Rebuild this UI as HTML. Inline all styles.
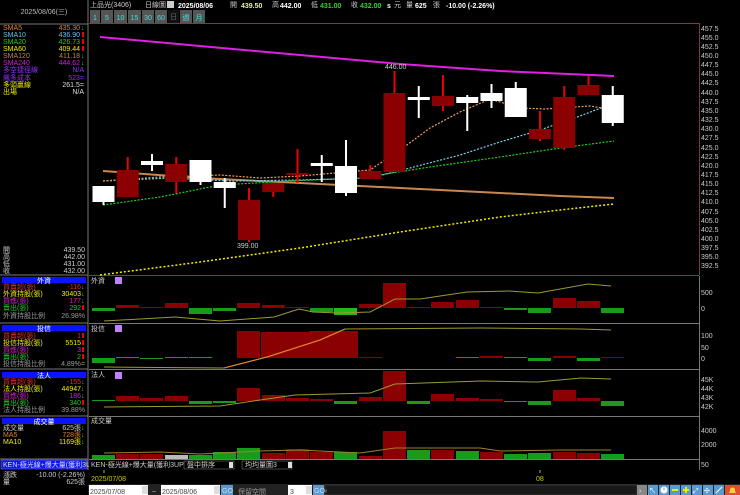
<!DOCTYPE html>
<html><head><meta charset="utf-8">
<style>
html,body{margin:0;padding:0;background:#000;width:740px;height:495px;overflow:hidden}
svg{display:block}
text{font-family:"Liberation Sans","Noto Sans CJK TC",sans-serif;font-size:7px}
.m{font-family:"Liberation Mono","Noto Sans CJK TC",monospace}
</style></head><body>
<svg width="740" height="495" viewBox="0 0 740 495" xmlns="http://www.w3.org/2000/svg">
<rect width="740" height="495" fill="#000"/>
<!-- left panel frame -->
<line x1="88" y1="0" x2="88" y2="470" stroke="#777" stroke-width="1"/>
<line x1="0" y1="24" x2="88" y2="24" stroke="#777"/>
<text x="44" y="14" fill="#bbb" text-anchor="middle" font-size="7">2025/08/06(三)</text>
<!-- SMA list -->
<g font-size="7">
<text x="3" y="30" fill="#e08030">SMA5</text><text x="80" y="30" fill="#e08030" text-anchor="end">435.30</text><text x="81" y="30" fill="#2c2">↓</text>
<text x="3" y="37" fill="#5cc8e8">SMA10</text><text x="80" y="37" fill="#5cc8e8" text-anchor="end">436.90</text><rect x="82" y="32" width="2" height="5" fill="#e00"/>
<text x="3" y="44" fill="#2c2">SMA20</text><text x="80" y="44" fill="#2c2" text-anchor="end">426.73</text><rect x="82" y="39" width="2" height="5" fill="#e00"/>
<text x="3" y="51" fill="#ee0">SMA60</text><text x="80" y="51" fill="#ee0" text-anchor="end">409.44</text><rect x="82" y="46" width="2" height="5" fill="#e00"/>
<text x="3" y="58" fill="#c08050">SMA120</text><text x="80" y="58" fill="#c08050" text-anchor="end">411.18</text><text x="81" y="58" fill="#2c2">↓</text>
<text x="3" y="65" fill="#d020d0">SMA240</text><text x="80" y="65" fill="#d020d0" text-anchor="end">444.62</text><text x="81" y="65" fill="#2c2">↓</text>
<text x="3" y="72" fill="#9030ff">多空捷徑線</text><text x="84" y="72" fill="#9030ff" text-anchor="end">N/A</text>
<text x="3" y="80" fill="#9030ff">飆多成本</text><text x="84" y="80" fill="#9030ff" text-anchor="end">523=</text>
<text x="3" y="87" fill="#ee0">多頭贏線</text><text x="84" y="87" fill="#ddd" text-anchor="end">261.5=</text>
<text x="3" y="94" fill="#ee0">出場</text><text x="84" y="94" fill="#ddd" text-anchor="end">N/A</text>
</g>
<g font-size="7" fill="#ccc">
<text x="3" y="252">開</text><text x="85" y="252" text-anchor="end">439.50</text>
<text x="3" y="259">高</text><text x="85" y="259" text-anchor="end">442.00</text>
<text x="3" y="266">低</text><text x="85" y="266" text-anchor="end">431.00</text>
<text x="3" y="273">收</text><text x="85" y="273" text-anchor="end">432.00</text>
</g>
<g stroke="#777"><line x1="0" y1="275" x2="88" y2="275"/><line x1="0" y1="323" x2="88" y2="323"/><line x1="0" y1="369" x2="88" y2="369"/><line x1="0" y1="416" x2="88" y2="416"/><line x1="0" y1="459" x2="88" y2="459"/></g>
<!-- 外資 -->
<rect x="2" y="277" width="84" height="6" fill="#0a14ff"/><text x="44" y="283" fill="#fff" text-anchor="middle">外資</text>
<g font-size="7">
<text x="3" y="289" fill="#e03030">買賣超(張)</text><text x="81" y="289" fill="#e03030" text-anchor="end">-116</text><text x="81" y="289" fill="#2c2">↓</text>
<text x="3" y="296" fill="#ee0">外資持股(張)</text><text x="81" y="296" fill="#ee0" text-anchor="end">30403</text><text x="81" y="296" fill="#2c2">↓</text>
<text x="3" y="303" fill="#d020d0">買進(張)</text><text x="81" y="303" fill="#d020d0" text-anchor="end">177</text><text x="81" y="303" fill="#2c2">↓</text>
<text x="3" y="310" fill="#2c2">賣出(張)</text><text x="81" y="310" fill="#2c2" text-anchor="end">292</text><rect x="82" y="305" width="2" height="5" fill="#e00"/>
<text x="3" y="318" fill="#999">外資持股比例</text><text x="85" y="318" fill="#999" text-anchor="end">26.98%</text>
</g>
<!-- 投信 -->
<rect x="2" y="325" width="84" height="6" fill="#0a14ff"/><text x="44" y="331" fill="#fff" text-anchor="middle">投信</text>
<g font-size="7">
<text x="3" y="338" fill="#e03030">買賣超(張)</text><text x="81" y="338" fill="#e03030" text-anchor="end">1</text><rect x="82" y="333" width="2" height="5" fill="#e00"/>
<text x="3" y="345" fill="#ee0">投信持股(張)</text><text x="81" y="345" fill="#ee0" text-anchor="end">5515</text><rect x="82" y="340" width="2" height="5" fill="#e00"/>
<text x="3" y="352" fill="#d020d0">買進(張)</text><text x="81" y="352" fill="#d020d0" text-anchor="end">3</text><rect x="82" y="347" width="2" height="5" fill="#e00"/>
<text x="3" y="359" fill="#2c2">賣出(張)</text><text x="81" y="359" fill="#2c2" text-anchor="end">2</text><rect x="82" y="354" width="2" height="5" fill="#e00"/>
<text x="3" y="366" fill="#999">投信持股比例</text><text x="85" y="366" fill="#999" text-anchor="end">4.89%=</text>
</g>
<!-- 法人 -->
<rect x="2" y="372" width="84" height="6" fill="#0a14ff"/><text x="44" y="378" fill="#fff" text-anchor="middle">法人</text>
<g font-size="7">
<text x="3" y="384" fill="#e03030">買賣超(張)</text><text x="81" y="384" fill="#e03030" text-anchor="end">-155</text><text x="81" y="384" fill="#2c2">↓</text>
<text x="3" y="391" fill="#ee0">法人持股(張)</text><text x="81" y="391" fill="#ee0" text-anchor="end">44947</text><text x="81" y="391" fill="#2c2">↓</text>
<text x="3" y="398" fill="#d020d0">買進(張)</text><text x="81" y="398" fill="#d020d0" text-anchor="end">186</text><text x="81" y="398" fill="#2c2">↓</text>
<text x="3" y="405" fill="#2c2">賣出(張)</text><text x="81" y="405" fill="#2c2" text-anchor="end">340</text><rect x="82" y="400" width="2" height="5" fill="#e00"/>
<text x="3" y="412" fill="#999">法人持股比例</text><text x="85" y="412" fill="#999" text-anchor="end">39.88%</text>
</g>
<!-- 成交量 -->
<rect x="2" y="418" width="84" height="6" fill="#0a14ff"/><text x="44" y="424" fill="#fff" text-anchor="middle">成交量</text>
<g font-size="7">
<text x="3" y="430" fill="#ccc">成交量</text><text x="81" y="430" fill="#ccc" text-anchor="end">625張</text><text x="81" y="430" fill="#2c2">↓</text>
<text x="3" y="437" fill="#e08030">MA5</text><text x="81" y="437" fill="#e08030" text-anchor="end">728張</text><text x="81" y="437" fill="#2c2">↓</text>
<text x="3" y="444" fill="#ee0">MA10</text><text x="81" y="444" fill="#ee0" text-anchor="end">1169張</text><text x="81" y="444" fill="#2c2">↓</text>
</g>
<!-- KEN bar -->
<rect x="1" y="460" width="86" height="9" fill="#0a14ff" stroke="#888" stroke-width="0.5"/>
<text x="3" y="467" fill="#ddd">KEN-極光線+爆大量(獲利3UP)</text>
<text x="3" y="477" fill="#ccc">漲跌</text><text x="85" y="477" fill="#ccc" text-anchor="end">-10.00 (-2.26%)</text>
<text x="3" y="484" fill="#ccc">量</text><text x="85" y="484" fill="#ccc" text-anchor="end">625張</text>

<!-- header -->
<g font-size="8">
<text x="90" y="7" fill="#ccc">上品光(3406)</text>
<text x="145" y="7" fill="#ccc">日線圖</text>
<rect x="167" y="1" width="7" height="7" fill="#ccc"/>
<text x="178" y="8" fill="#fff" font-weight="bold" font-size="9">2025/08/06</text>
<text x="230" y="7" fill="#ccc">開</text><text x="241" y="8" fill="#e8f0a0" font-weight="bold" font-size="9">439.50</text>
<text x="272" y="7" fill="#ccc">高</text><text x="280" y="8" fill="#fff" font-weight="bold" font-size="9">442.00</text>
<text x="311" y="7" fill="#ccc">低</text><text x="320" y="8" fill="#3c3" font-weight="bold" font-size="9">431.00</text>
<text x="351" y="7" fill="#ccc">收</text><text x="360" y="8" fill="#3c3" font-weight="bold" font-size="9">432.00</text>
<text x="387" y="8" fill="#fff" font-weight="bold">s</text><text x="394" y="7" fill="#ccc">元</text>
<text x="406" y="7" fill="#ccc">量</text><text x="415" y="8" fill="#fff" font-weight="bold" font-size="9">625</text><text x="433" y="7" fill="#ccc">張</text>
<text x="446" y="8" fill="#fff" font-weight="bold" font-size="9">-10.00 (-2.26%)</text>
</g>
<!-- buttons -->
<g font-size="8" fill="#4dd">
<rect x="90" y="10" width="10" height="13" fill="#555"/><text x="95" y="20" text-anchor="middle">1</text>
<rect x="101" y="10" width="12" height="13" fill="#555"/><text x="107" y="20" text-anchor="middle">5</text>
<rect x="114" y="10" width="13" height="13" fill="#555"/><text x="120.5" y="20" text-anchor="middle">10</text>
<rect x="128" y="10" width="13" height="13" fill="#555"/><text x="134.5" y="20" text-anchor="middle">15</text>
<rect x="142" y="10" width="12" height="13" fill="#555"/><text x="148" y="20" text-anchor="middle">30</text>
<rect x="155" y="10" width="12" height="13" fill="#555"/><text x="161" y="20" text-anchor="middle">60</text>
<rect x="168" y="10" width="11" height="13" fill="#111"/><text x="173.5" y="19" text-anchor="middle" fill="#666" font-size="6">日</text>
<rect x="180" y="10" width="12" height="13" fill="#555"/><text x="186" y="20" text-anchor="middle">週</text>
<rect x="193" y="10" width="12" height="13" fill="#555"/><text x="199" y="20" text-anchor="middle">月</text>
</g>

<!-- main chart frame -->
<line x1="89" y1="23.5" x2="699" y2="23.5" stroke="#7a3a4a"/>
<line x1="699.5" y1="23" x2="699.5" y2="275" stroke="#7a3a4a"/>
<line x1="89" y1="275.5" x2="699" y2="275.5" stroke="#7a3a4a"/>
<g stroke="#777"><line x1="89" y1="323.5" x2="699" y2="323.5"/><line x1="89" y1="369.5" x2="699" y2="369.5"/><line x1="89" y1="416.5" x2="699" y2="416.5"/><line x1="89" y1="459.5" x2="699" y2="459.5"/>
<line x1="699.5" y1="276" x2="699.5" y2="470"/></g>

<!-- price axis -->
<g fill="#ccc" font-size="7.5">
<text x="701" y="31">457.5</text><text x="701" y="40">455.0</text><text x="701" y="49">452.5</text><text x="701" y="58">450.0</text><text x="701" y="67">447.5</text><text x="701" y="76">445.0</text><text x="701" y="85">442.5</text><text x="701" y="95">440.0</text><text x="701" y="104">437.5</text><text x="701" y="113">435.0</text><text x="701" y="122">432.5</text><text x="701" y="131">430.0</text><text x="701" y="140">427.5</text><text x="701" y="150">425.0</text><text x="701" y="159">422.5</text><text x="701" y="168">420.0</text><text x="701" y="177">417.5</text><text x="701" y="186">415.0</text><text x="701" y="195">412.5</text><text x="701" y="204">410.0</text><text x="701" y="214">407.5</text><text x="701" y="223">405.0</text><text x="701" y="232">402.5</text><text x="701" y="241">400.0</text><text x="701" y="250">397.5</text><text x="701" y="259">395.0</text><text x="701" y="268">392.5</text>
<text x="701" y="295">500</text><text x="701" y="311">0</text>
<text x="701" y="338">100</text><text x="701" y="350">50</text><text x="701" y="361">0</text>
<text x="701" y="382">45K</text><text x="701" y="391">44K</text><text x="701" y="400">43K</text><text x="701" y="409">42K</text>
<text x="701" y="433">4000</text><text x="701" y="447">2000</text><text x="701" y="467">50</text>
</g>

<!-- MA lines -->
<polyline points="100,37 200,46 300,55 400,64 500,71 614,76" fill="none" stroke="#e020e0" stroke-width="2"/>
<polyline points="103,171 200,178 300,183 400,188 500,193 560,196 614,198" fill="none" stroke="#c88850" stroke-width="2"/>
<polyline points="100,275 200,262 300,248 400,232 500,217 560,210 614,204" fill="none" stroke="#ee0" stroke-width="1.5" stroke-dasharray="2,2"/>
<polyline points="103,205 160,197 220,185 290,181 360,178 430,167 500,157 560,148 614,141" fill="none" stroke="#2c2" stroke-width="1.2" stroke-dasharray="2,1.5"/>
<polyline points="103,181 170,178 230,181 300,180 370,178 410,168 460,155 500,142 540,130 580,116 614,103" fill="none" stroke="#7cd0f0" stroke-width="1.2" stroke-dasharray="2,1.5"/>
<polyline points="103,181 160,177 220,175 260,178 300,176 370,170 400,150 430,128 460,112 490,99 520,108 545,109 590,106 614,110" fill="none" stroke="#f0a050" stroke-width="1.2" stroke-dasharray="2,1.5"/>

<!-- candles -->
<g>
<rect x="102.5" y="186" width="2" height="19" fill="#fff"/><rect x="92.5" y="186" width="22" height="16" fill="#fff"/>
<rect x="126.75" y="157" width="2" height="40" fill="#e00"/><rect x="116.75" y="170" width="22" height="27" fill="#8b0000"/>
<rect x="151" y="154" width="2" height="17" fill="#fff"/><rect x="141" y="161" width="22" height="4" fill="#fff"/>
<rect x="175.25" y="157" width="2" height="36" fill="#e00"/><rect x="165.25" y="164" width="22" height="18" fill="#8b0000"/>
<rect x="199.5" y="160" width="2" height="25" fill="#fff"/><rect x="189.5" y="160" width="22" height="22" fill="#fff"/>
<rect x="223.75" y="178" width="2" height="30" fill="#fff"/><rect x="213.75" y="182" width="22" height="6" fill="#fff"/>
<rect x="248" y="188" width="2" height="54" fill="#e00"/><rect x="238" y="200" width="22" height="40" fill="#8b0000"/>
<rect x="272.25" y="183" width="2" height="14" fill="#e00"/><rect x="262.25" y="183" width="22" height="9" fill="#8b0000"/>
<rect x="296.5" y="149" width="2" height="34" fill="#e00"/><rect x="286.5" y="173" width="22" height="2" fill="#8b0000"/>
<rect x="320.75" y="155" width="2" height="27" fill="#fff"/><rect x="310.75" y="163" width="22" height="3" fill="#fff"/>
<rect x="345" y="140" width="2" height="56" fill="#fff"/><rect x="335" y="166" width="22" height="27" fill="#fff"/>
<rect x="369.25" y="165" width="2" height="14" fill="#e00"/><rect x="359.25" y="171" width="22" height="8" fill="#8b0000"/>
<rect x="393.5" y="71" width="2" height="101" fill="#e00"/><rect x="383.5" y="93" width="22" height="79" fill="#8b0000"/>
<rect x="417.75" y="86" width="2" height="32" fill="#fff"/><rect x="407.75" y="97" width="22" height="3" fill="#fff"/>
<rect x="442" y="75" width="2" height="36" fill="#e00"/><rect x="432" y="96" width="22" height="10" fill="#8b0000"/>
<rect x="466.25" y="95" width="2" height="36" fill="#fff"/><rect x="456.25" y="97" width="22" height="6" fill="#fff"/>
<rect x="490.5" y="84" width="2" height="24" fill="#fff"/><rect x="480.5" y="93" width="22" height="8" fill="#fff"/>
<rect x="514.75" y="82" width="2" height="35" fill="#fff"/><rect x="504.75" y="88" width="22" height="29" fill="#fff"/>
<rect x="539" y="111" width="2" height="30" fill="#e00"/><rect x="529" y="129" width="22" height="10" fill="#8b0000"/>
<rect x="563.25" y="86" width="2" height="64" fill="#e00"/><rect x="553.25" y="97" width="22" height="51" fill="#8b0000"/>
<rect x="587.5" y="76" width="2" height="19" fill="#e00"/><rect x="577.5" y="85" width="22" height="10" fill="#8b0000"/>
<rect x="611.75" y="86" width="2" height="40" fill="#fff"/><rect x="601.75" y="95" width="22" height="28" fill="#fff"/>
</g>
<text x="385" y="69" fill="#ccc" font-size="7.5">446.00</text>
<text x="237" y="248" fill="#ccc" font-size="7.5">399.00</text>

<!-- 外資 panel -->
<text x="91" y="283" fill="#ccc">外資</text><rect x="115" y="277" width="7" height="7" fill="#c080ff"/>
<g>
<rect x="92" y="308" width="23" height="3" fill="#1a9a1a"/>
<rect x="116" y="305" width="23" height="3" fill="#8b0000"/>
<rect x="140" y="307" width="23" height="1" fill="#8b0000"/>
<rect x="165" y="303" width="23" height="5" fill="#8b0000"/>
<rect x="189" y="308" width="23" height="6" fill="#1a9a1a"/>
<rect x="213" y="308" width="23" height="3" fill="#1a9a1a"/>
<rect x="237" y="303" width="23" height="5" fill="#8b0000"/>
<rect x="262" y="305" width="23" height="3" fill="#8b0000"/>
<rect x="286" y="307" width="23" height="1" fill="#8b0000"/>
<rect x="310" y="308" width="23" height="4" fill="#1a9a1a"/>
<rect x="334" y="308" width="23" height="7" fill="#22b822"/>
<rect x="359" y="304" width="23" height="4" fill="#8b0000"/>
<rect x="383" y="283" width="23" height="25" fill="#8b0000"/>
<rect x="407" y="307" width="23" height="1" fill="#8b0000"/>
<rect x="431" y="302" width="23" height="6" fill="#8b0000"/>
<rect x="456" y="300" width="23" height="8" fill="#8b0000"/>
<rect x="480" y="307" width="23" height="1" fill="#8b0000"/>
<rect x="504" y="308" width="23" height="2" fill="#1a9a1a"/>
<rect x="528" y="308" width="23" height="5" fill="#1a9a1a"/>
<rect x="553" y="298" width="23" height="10" fill="#8b0000"/>
<rect x="577" y="301" width="23" height="7" fill="#8b0000"/>
<rect x="601" y="308" width="23" height="5" fill="#1a9a1a"/>
</g>
<polyline points="104,321 175,317 220,321 274,317 299,309 313,312 338,313 370,312 395,299 420,299 467,292 509,291 538,293 588,284 611,286" fill="none" stroke="#9a9a30" stroke-width="1"/>

<!-- 投信 panel -->
<text x="91" y="331" fill="#ccc">投信</text><rect x="115" y="325" width="7" height="7" fill="#c080ff"/>
<g>
<rect x="92" y="358" width="23" height="5" fill="#1a9a1a"/>
<rect x="116" y="357" width="23" height="1" fill="#1a9a1a"/>
<rect x="140" y="358" width="23" height="1" fill="#1a9a1a"/>
<rect x="165" y="357" width="23" height="1" fill="#1a9a1a"/>
<rect x="189" y="357" width="23" height="1" fill="#1a9a1a"/>
<rect x="237" y="331" width="23" height="27" fill="#8b0000"/>
<rect x="261" y="332" width="24" height="26" fill="#8b0000"/>
<rect x="285" y="332" width="24" height="26" fill="#8b0000"/>
<rect x="309" y="331" width="49" height="27" fill="#8b0000"/>
<rect x="359" y="357" width="23" height="1" fill="#8b0000"/>
<rect x="456" y="357" width="23" height="1" fill="#1a9a1a"/>
<rect x="480" y="356" width="23" height="2" fill="#8b0000"/>
<rect x="504" y="357" width="23" height="1" fill="#1a9a1a"/>
<rect x="528" y="358" width="23" height="3" fill="#1a9a1a"/>
<rect x="553" y="356" width="23" height="2" fill="#8b0000"/>
<rect x="577" y="358" width="23" height="3" fill="#1a9a1a"/>
<rect x="601" y="357" width="23" height="1" fill="#8b0000"/>
</g>
<polyline points="104,367 224,368 267,357 320,340 345,329 481,328 581,329 611,330" fill="none" stroke="#9a9a30" stroke-width="1"/>
<polyline points="224,368 267,357 320,340 345,329" fill="none" stroke="#f08030" stroke-width="1"/>

<!-- 法人 panel -->
<text x="91" y="377" fill="#ccc">法人</text><rect x="115" y="372" width="7" height="7" fill="#c080ff"/>
<g>
<rect x="92" y="400" width="23" height="1" fill="#1a9a1a"/>
<rect x="116" y="396" width="23" height="5" fill="#8b0000"/>
<rect x="140" y="398" width="23" height="3" fill="#8b0000"/>
<rect x="165" y="396" width="23" height="5" fill="#8b0000"/>
<rect x="189" y="401" width="23" height="3" fill="#1a9a1a"/>
<rect x="213" y="401" width="23" height="2" fill="#1a9a1a"/>
<rect x="237" y="388" width="23" height="13" fill="#8b0000"/>
<rect x="262" y="395" width="23" height="6" fill="#8b0000"/>
<rect x="286" y="398" width="23" height="3" fill="#8b0000"/>
<rect x="310" y="399" width="23" height="2" fill="#8b0000"/>
<rect x="334" y="401" width="23" height="3" fill="#1a9a1a"/>
<rect x="359" y="397" width="23" height="4" fill="#8b0000"/>
<rect x="383" y="371" width="23" height="30" fill="#8b0000"/>
<rect x="407" y="401" width="23" height="3" fill="#1a9a1a"/>
<rect x="431" y="394" width="23" height="7" fill="#8b0000"/>
<rect x="456" y="398" width="23" height="3" fill="#8b0000"/>
<rect x="480" y="399" width="23" height="2" fill="#8b0000"/>
<rect x="504" y="401" width="23" height="1" fill="#1a9a1a"/>
<rect x="528" y="401" width="23" height="4" fill="#1a9a1a"/>
<rect x="553" y="390" width="23" height="11" fill="#8b0000"/>
<rect x="577" y="398" width="23" height="3" fill="#8b0000"/>
<rect x="601" y="401" width="23" height="5" fill="#1a9a1a"/>
</g>
<polyline points="104,407 220,406 260,400 295,395 370,393 395,384 481,381 538,382 581,378 611,379" fill="none" stroke="#9a9a30" stroke-width="1"/>

<!-- volume panel -->
<text x="91" y="423" fill="#ccc">成交量</text>
<g>
<rect x="92" y="455" width="23" height="4" fill="#1a9a1a"/>
<rect x="116" y="454" width="23" height="5" fill="#8b0000"/>
<rect x="140" y="454" width="23" height="5" fill="#8b0000"/>
<rect x="165" y="455" width="23" height="4" fill="#bbb"/>
<rect x="189" y="455" width="23" height="4" fill="#1a9a1a"/>
<rect x="213" y="452" width="23" height="7" fill="#1a9a1a"/>
<rect x="237" y="448" width="23" height="11" fill="#1a9a1a"/>
<rect x="262" y="453" width="23" height="6" fill="#8b0000"/>
<rect x="286" y="449" width="23" height="10" fill="#8b0000"/>
<rect x="310" y="452" width="23" height="7" fill="#8b0000"/>
<rect x="334" y="452" width="23" height="7" fill="#1a9a1a"/>
<rect x="359" y="456" width="23" height="3" fill="#8b0000"/>
<rect x="383" y="431" width="23" height="28" fill="#8b0000"/>
<rect x="407" y="450" width="23" height="9" fill="#1a9a1a"/>
<rect x="431" y="450" width="23" height="9" fill="#8b0000"/>
<rect x="456" y="451" width="23" height="8" fill="#1a9a1a"/>
<rect x="480" y="452" width="23" height="7" fill="#8b0000"/>
<rect x="504" y="454" width="23" height="5" fill="#1a9a1a"/>
<rect x="528" y="453" width="23" height="6" fill="#1a9a1a"/>
<rect x="553" y="452" width="23" height="7" fill="#8b0000"/>
<rect x="577" y="453" width="23" height="6" fill="#8b0000"/>
<rect x="601" y="454" width="23" height="5" fill="#1a9a1a"/>
</g>
<polyline points="104,453 160,452 200,454 260,451 300,450 360,453 395,448 430,448 480,448 500,451 560,450 611,450" fill="none" stroke="#a08030" stroke-width="1"/>

<!-- KEN row -->
<rect x="89" y="460" width="610" height="10" fill="#000"/>
<text x="91" y="467" fill="#ccc">KEN-極光線+爆大量(獲利3UP)</text>
<rect x="184" y="461" width="50" height="8" fill="#000" stroke="#888" stroke-width="0.5"/><text x="187" y="467" fill="#ccc">盤中排序</text><rect x="229" y="462" width="4" height="6" fill="#ddd"/>
<rect x="242" y="461" width="50" height="8" fill="#000" stroke="#888" stroke-width="0.5"/><text x="245" y="467" fill="#ccc">均均量圖3</text><rect x="288" y="462" width="4" height="6" fill="#ddd"/>
<!-- date axis -->
<line x1="104" y1="470" x2="104" y2="473" stroke="#aaa"/><text x="91" y="481" fill="#cc0" font-size="7.5">2025/07/08</text>
<line x1="540" y1="470" x2="540" y2="473" stroke="#aaa"/><text x="536" y="481" fill="#cc0" font-size="7.5">08</text>

<!-- bottom inputs -->
<rect x="88" y="484" width="652" height="11" fill="#222"/>
<rect x="89" y="485" width="59" height="10" fill="#fff"/><text x="90" y="494" fill="#444" font-size="10">2025/07/08</text>
<rect x="142" y="486" width="6" height="8" fill="#ddd"/>
<text x="152" y="494" fill="#ccc" font-size="9">~</text>
<rect x="161" y="485" width="59" height="10" fill="#fff"/><text x="162" y="494" fill="#444" font-size="10">2025/08/06</text>
<rect x="214" y="486" width="6" height="8" fill="#ddd"/>
<rect x="221" y="485" width="12" height="10" fill="#5a9ad0"/><text x="222" y="493" fill="#cde" font-size="6">GO</text>
<text x="238" y="494" fill="#999" font-size="11">保留空間</text>
<rect x="288" y="485" width="24" height="10" fill="#fff"/><text x="290" y="494" fill="#444" font-size="9">3</text>
<rect x="306" y="486" width="6" height="8" fill="#ddd"/>
<rect x="313" y="485" width="11" height="10" fill="#5a9ad0"/><text x="314" y="493" fill="#cde" font-size="6">GO</text>
<rect x="325" y="485" width="312" height="10" fill="#1a1a1a" stroke="#555" stroke-width="0.5"/><text x="325" y="493" fill="#aaa" font-size="7">‹</text>
<rect x="637" y="485" width="10" height="10" fill="#888"/><text x="639" y="493" fill="#eee" font-size="8">›</text>
<g>
<rect x="648" y="485" width="10" height="10" fill="#5a9ad0"/><text x="649" y="493" fill="#fff" font-size="8">↖</text>
<rect x="659" y="485" width="10" height="10" fill="#5a9ad0"/><circle cx="664" cy="490" r="3.5" fill="#fff"/><line x1="664" y1="490" x2="664" y2="487.5" stroke="#5a9ad0"/>
<rect x="670" y="485" width="10" height="10" fill="#5a9ad0"/><rect x="672" y="489" width="6" height="2" fill="#ee0"/>
<rect x="681" y="485" width="10" height="10" fill="#5a9ad0"/><rect x="683" y="489" width="6" height="2" fill="#ee0"/><rect x="685" y="487" width="2" height="6" fill="#ee0"/>
<rect x="692" y="485" width="10" height="10" fill="#5a9ad0"/><text x="693" y="493" fill="#fff" font-size="8">⤢</text>
<rect x="703" y="485" width="10" height="10" fill="#5a9ad0"/><text x="704" y="493" fill="#fff" font-size="8">✣</text>
<rect x="714" y="485" width="10" height="10" fill="#5a9ad0"/><line x1="716" y1="493" x2="722" y2="487" stroke="#fff"/>
<rect x="725" y="485" width="15" height="10" fill="#e05030"/><path d="M729 493 L736 493 L735 491 L735 489 Q732.5 486 730 489 L730 491 Z" fill="#ffd040"/>
</g>
</svg>
</body></html>
